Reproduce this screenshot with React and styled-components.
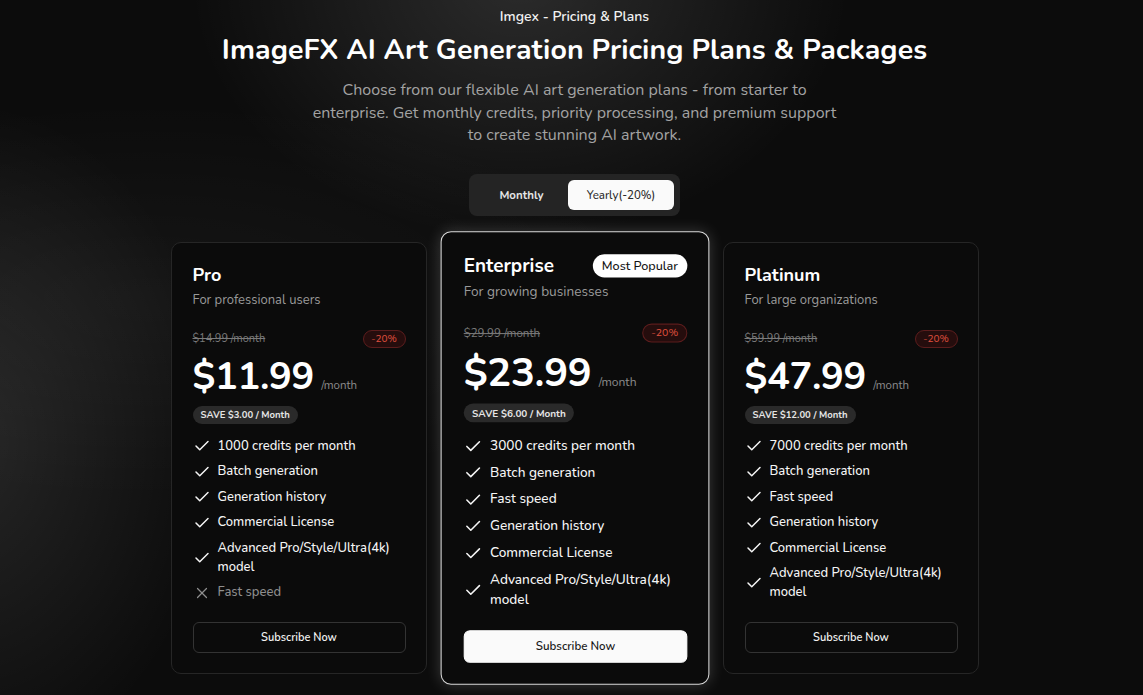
import React from "react";
import styled, { createGlobalStyle } from "styled-components";
import { Check, X } from "lucide-react";

const GlobalStyle = createGlobalStyle`
  * { box-sizing: border-box; }
  html, body {
    margin: 0;
    padding: 0;
    background: #0c0c0c;
  }
  body {
    font-family: "Nunito", "Lato", "Noto Sans", sans-serif;
    color: #fff;
  }
`;

const plans = [
  {
    name: "Pro",
    desc: "For professional users",
    old: "$14.99 /month",
    price: "$11.99",
    save: "SAVE $3.00 / Month",
    features: [
      { text: "1000 credits per month", ok: true },
      { text: "Batch generation", ok: true },
      { text: "Generation history", ok: true },
      { text: "Commercial License", ok: true },
      { text: "Advanced Pro/Style/Ultra(4k) model", ok: true },
      { text: "Fast speed", ok: false },
    ],
  },
  {
    name: "Enterprise",
    desc: "For growing businesses",
    old: "$29.99 /month",
    price: "$23.99",
    save: "SAVE $6.00 / Month",
    popular: true,
    features: [
      { text: "3000 credits per month", ok: true },
      { text: "Batch generation", ok: true },
      { text: "Fast speed", ok: true },
      { text: "Generation history", ok: true },
      { text: "Commercial License", ok: true },
      { text: "Advanced Pro/Style/Ultra(4k) model", ok: true },
    ],
  },
  {
    name: "Platinum",
    desc: "For large organizations",
    old: "$59.99 /month",
    price: "$47.99",
    save: "SAVE $12.00 / Month",
    features: [
      { text: "7000 credits per month", ok: true },
      { text: "Batch generation", ok: true },
      { text: "Fast speed", ok: true },
      { text: "Generation history", ok: true },
      { text: "Commercial License", ok: true },
      { text: "Advanced Pro/Style/Ultra(4k) model", ok: true },
    ],
  },
];

export default function App() {
  return (
    <>
      <GlobalStyle />
      <Page>
        <Eyebrow>Imgex - Pricing &amp; Plans</Eyebrow>
        <Title>ImageFX AI Art Generation Pricing Plans &amp; Packages</Title>
        <Lead>
          Choose from our flexible AI art generation plans - from starter to
          enterprise. Get monthly credits, priority processing, and premium
          support to create stunning AI artwork.
        </Lead>

        <Toggle>
          <ToggleButton>Monthly</ToggleButton>
          <ToggleButton active>Yearly(-20%)</ToggleButton>
        </Toggle>

        <Cards>
          {plans.map((p) => (
            <Card key={p.name} featured={p.popular}>
              <CardHead>
                <PlanName>{p.name}</PlanName>
                {p.popular && <Popular>Most Popular</Popular>}
              </CardHead>
              <PlanDesc>{p.desc}</PlanDesc>

              <OldRow>
                <OldPrice>{p.old}</OldPrice>
                <Discount>-20%</Discount>
              </OldRow>
              <PriceRow>
                <Price>{p.price}</Price>
                <Per>/month</Per>
              </PriceRow>
              <Save>{p.save}</Save>

              <Features>
                {p.features.map((f) => (
                  <Feature key={f.text} ok={f.ok}>
                    <IconBox>
                      {f.ok ? (
                        <Check size={18} strokeWidth={2} />
                      ) : (
                        <X size={18} strokeWidth={1.6} />
                      )}
                    </IconBox>
                    <span>{f.text}</span>
                  </Feature>
                ))}
              </Features>

              <Subscribe featured={p.popular}>Subscribe Now</Subscribe>
            </Card>
          ))}
        </Cards>
      </Page>
    </>
  );
}

const Page = styled.main`
  min-height: 695px;
  padding: 8px 0 0 6px;
  display: flex;
  flex-direction: column;
  align-items: center;
  background:
    radial-gradient(ellipse 330px 260px at 520px -20px, rgba(255,255,255,0.13), rgba(255,255,255,0) 100%),
    radial-gradient(ellipse 260px 340px at -40px 440px, rgba(255,255,255,0.11), rgba(255,255,255,0) 100%),
    radial-gradient(ellipse 500px 200px at 150px 300px, rgba(255,255,255,0.04), rgba(255,255,255,0) 100%),
    #0c0c0c;
  overflow: hidden;
`;

const Eyebrow = styled.div`
  font-size: 14px;
  line-height: 18px;
  font-weight: 600;
  color: #f2f2f2;
`;

const Title = styled.h1`
  margin: 6px 0 0;
  font-size: 28.5px;
  line-height: 36px;
  font-weight: 700;
  color: #fff;
  letter-spacing: 0.1px;
`;

const Lead = styled.p`
  margin: 11px 0 0;
  width: 530px;
  text-align: center;
  font-size: 16px;
  line-height: 22.5px;
  color: #a3a3a3;
`;

const Toggle = styled.div`
  margin-top: 27px;
  display: flex;
  padding: 6px;
  width: 211px;
  height: 42px;
  background: #242424;
  border-radius: 8px;
`;

const ToggleButton = styled.div`
  flex: ${(p) => (p.active ? "0 0 106px" : "1")};
  display: flex;
  align-items: center;
  justify-content: center;
  border-radius: 6px;
  font-size: 11.5px;
  font-weight: ${(p) => (p.active ? 500 : 700)};
  background: ${(p) => (p.active ? "#fafafa" : "transparent")};
  color: ${(p) => (p.active ? "#2a2a2a" : "#e6e6e6")};
`;

const Cards = styled.div`
  margin-top: 26px;
  display: flex;
  gap: 20px;
  align-items: stretch;
`;

const Card = styled.section`
  width: 256px;
  height: 432px;
  padding: 20px 20px 20px 21px;
  display: flex;
  flex-direction: column;
  border-radius: 10px;
  background: #0b0b0b;
  border: 1px solid ${(p) => (p.featured ? "#d9d9d9" : "#262626")};
  box-shadow: ${(p) =>
    p.featured ? "0 0 14px rgba(255,255,255,0.18)" : "none"};
  transform: ${(p) => (p.featured ? "scale(1.05)" : "none")};
`;

const CardHead = styled.div`
  display: flex;
  align-items: center;
  justify-content: space-between;
  height: 24px;
`;

const PlanName = styled.h2`
  margin: 0;
  font-size: 18px;
  line-height: 24px;
  font-weight: 700;
  color: #fff;
`;

const Popular = styled.span`
  height: 22px;
  padding: 0 9px;
  display: inline-flex;
  align-items: center;
  border-radius: 11px;
  background: #fff;
  color: #111;
  font-size: 12px;
  font-weight: 500;
`;

const PlanDesc = styled.div`
  margin-top: 4px;
  font-size: 13px;
  line-height: 18px;
  color: #9a9a9a;
`;

const OldRow = styled.div`
  margin-top: 21px;
  display: flex;
  align-items: center;
  justify-content: space-between;
  height: 18px;
`;

const OldPrice = styled.span`
  font-size: 11px;
  color: #7a7a7a;
  text-decoration: line-through;
`;

const Discount = styled.span`
  height: 18px;
  width: 43px;
  display: inline-flex;
  align-items: center;
  justify-content: center;
  border-radius: 9px;
  border: 1px solid #5c1d1d;
  background: #250d0d;
  color: #e0513f;
  font-size: 10px;
`;

const PriceRow = styled.div`
  margin-top: 5px;
  display: flex;
  align-items: baseline;
  gap: 7px;
`;

const Price = styled.span`
  font-size: 38px;
  line-height: 48px;
  font-weight: 700;
  color: #fff;
  letter-spacing: -0.3px;
`;

const Per = styled.span`
  font-size: 11.5px;
  color: #8c8c8c;
`;

const Save = styled.div`
  margin-top: 5px;
  align-self: flex-start;
  height: 18px;
  padding: 0 8px;
  display: inline-flex;
  align-items: center;
  border-radius: 9px;
  background: #2a2a2a;
  color: #e6e6e6;
  font-size: 9.5px;
  font-weight: 700;
`;

const Features = styled.ul`
  list-style: none;
  margin: 13px 0 0;
  padding: 0;
  display: flex;
  flex-direction: column;
  gap: 6.5px;
`;

const Feature = styled.li`
  display: flex;
  align-items: center;
  gap: 7px;
  font-size: 13px;
  line-height: 19px;
  font-weight: 500;
  color: ${(p) => (p.ok ? "#f5f5f5" : "#8e8e8e")};
  padding-right: 10px;
`;

const IconBox = styled.span`
  flex: 0 0 18px;
  display: flex;
  align-items: center;
  justify-content: center;
  color: inherit;
`;

const Subscribe = styled.button`
  margin-top: auto;
  width: 100%;
  height: 31px;
  border-radius: 6px;
  font-family: inherit;
  font-size: 11px;
  font-weight: 600;
  cursor: pointer;
  border: 1px solid ${(p) => (p.featured ? "#fff" : "#333")};
  background: ${(p) => (p.featured ? "#fafafa" : "transparent")};
  color: ${(p) => (p.featured ? "#1a1a1a" : "#f2f2f2")};
`;
